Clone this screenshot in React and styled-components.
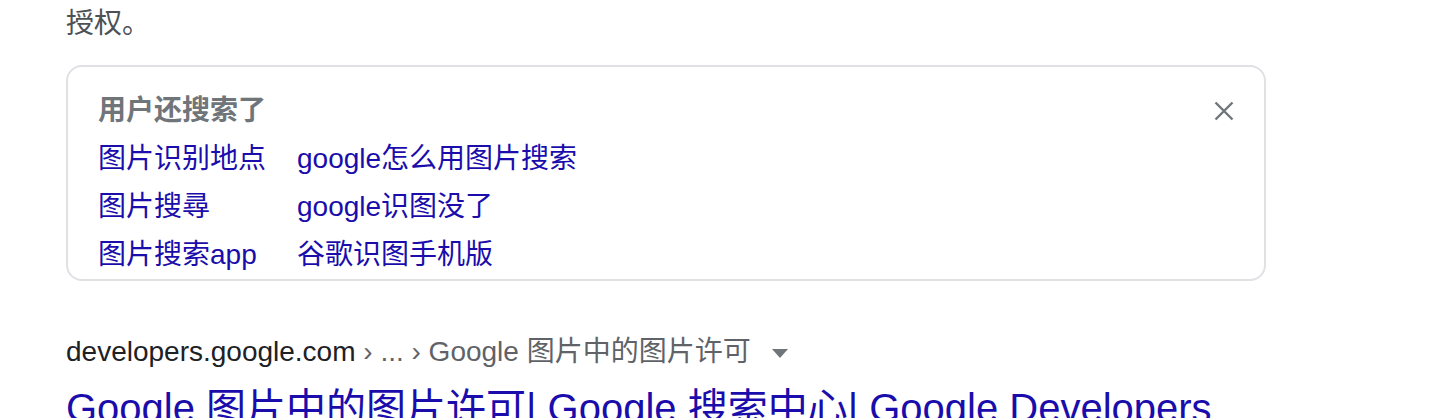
import React from "react";
import styled, { createGlobalStyle } from "styled-components";

const GlobalStyle = createGlobalStyle`
  html, body {
    margin: 0;
    padding: 0;
    background: #fff;
    overflow: hidden;
  }
  body {
    font-family: "Liberation Sans", Arial, "Noto Sans CJK SC", sans-serif;
  }
`;

const related = [
  ["图片识别地点", "google怎么用图片搜索"],
  ["图片搜尋", "google识图没了"],
  ["图片搜索app", "谷歌识图手机版"],
];

const Page = styled.div`
  width: 1446px;
  height: 418px;
  padding-left: 66px;
  box-sizing: border-box;
  overflow: hidden;
`;

const Snippet = styled.div`
  padding-top: 2px;
  font-size: 28px;
  line-height: 44px;
  color: #4d5156;
`;

const Card = styled.div`
  width: 1200px;
  box-sizing: border-box;
  margin-top: 19px;
  border: 2px solid #dfe1e5;
  border-radius: 16px;
  padding: 20px 30px 0 30px;
`;

const CardHeader = styled.div`
  display: flex;
  align-items: center;
  justify-content: space-between;
  height: 48px;
`;

const CardTitle = styled.div`
  font-size: 28px;
  line-height: 48px;
  font-weight: bold;
  color: #70757a;
`;

const CloseButton = styled.button`
  border: 0;
  background: none;
  padding: 0;
  width: 20px;
  height: 20px;
  display: flex;
  align-items: center;
  justify-content: center;
  cursor: pointer;
`;

const Grid = styled.div`
  display: grid;
  grid-template-columns: max-content max-content;
  column-gap: 31px;
`;

const RelatedLink = styled.a`
  font-size: 28px;
  line-height: 48px;
  color: #1a0dab;
  text-decoration: none;
  white-space: nowrap;
`;

const Crumbs = styled.div`
  margin-top: 49px;
  display: flex;
  align-items: center;
  font-size: 28px;
  line-height: 44px;
  white-space: nowrap;
`;

const Host = styled.span`
  color: #202124;
`;

const Path = styled.span`
  color: #5f6368;
`;

const DropArrow = styled.svg`
  margin-left: 21px;
  margin-top: 2px;
`;

const Title = styled.a`
  display: block;
  margin-top: 8px;
  font-size: 40px;
  line-height: 52px;
  color: #1a0dab;
  text-decoration: none;
  white-space: nowrap;
`;

export default function App() {
  return (
    <Page>
      <GlobalStyle />
      <Snippet>授权。</Snippet>

      <Card>
        <CardHeader>
          <CardTitle>用户还搜索了</CardTitle>
          <CloseButton aria-label="关闭">
            <svg width="20" height="20" viewBox="0 0 20 20">
              <path
                d="M1.5 1.5 L18.5 18.5 M18.5 1.5 L1.5 18.5"
                stroke="#70757a"
                strokeWidth="2.4"
                fill="none"
              />
            </svg>
          </CloseButton>
        </CardHeader>
        <Grid>
          {related.map(([a, b]) => (
            <React.Fragment key={a}>
              <RelatedLink href="#">{a}</RelatedLink>
              <RelatedLink href="#">{b}</RelatedLink>
            </React.Fragment>
          ))}
        </Grid>
      </Card>

      <Crumbs>
        <Host>developers.google.com</Host>
        <Path>&nbsp;› ... › Google 图片中的图片许可</Path>
        <DropArrow width="16" height="9" viewBox="0 0 16 9">
          <path d="M0 0 L16 0 L8 9 Z" fill="#70757a" />
        </DropArrow>
      </Crumbs>

      <Title href="#">Google 图片中的图片许可| Google 搜索中心| Google Developers</Title>
    </Page>
  );
}
